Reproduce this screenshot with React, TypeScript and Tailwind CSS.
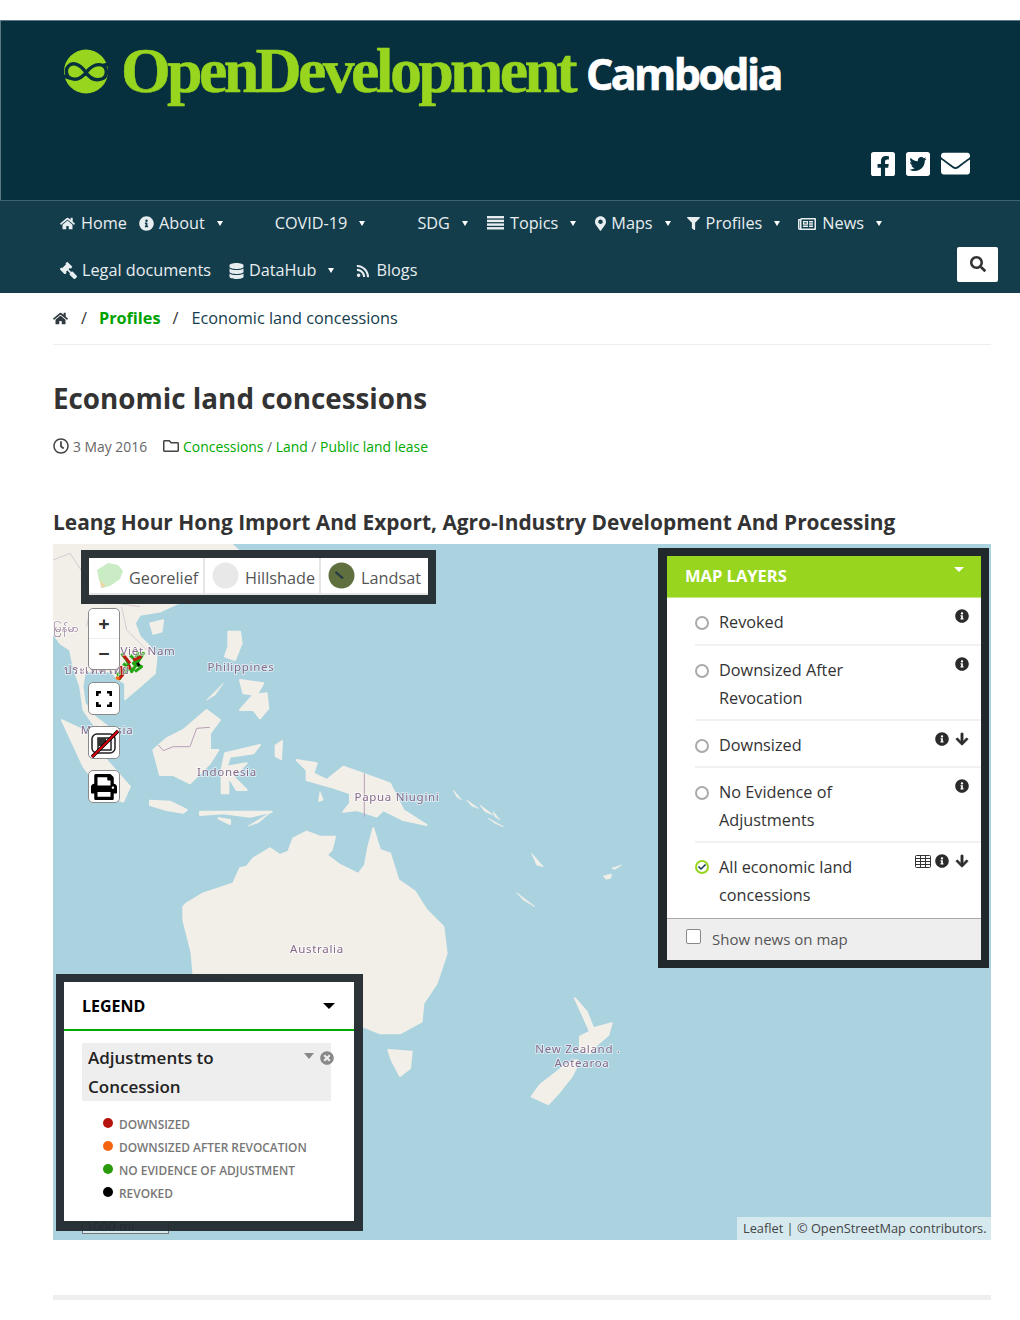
import React from "react";
import {
  FaHome, FaInfoCircle, FaMapMarkerAlt, FaFilter, FaRegNewspaper, FaGavel, FaDatabase, FaRss,
  FaSearch, FaFacebookSquare, FaTwitterSquare, FaEnvelope, FaRegClock, FaRegFolder, FaArrowDown,
  FaTimesCircle, FaCheck, FaPrint,
} from "react-icons/fa";

const Caret = ({ className = "" }: { className?: string }) => (
  <span className={`inline-block w-0 h-0 border-x-[3.5px] border-x-transparent border-t-[5px] border-t-white ${className}`} />
);

function NavItem({ icon, label, caret, className = "" }: { icon?: React.ReactNode; label: string; caret?: string; className?: string }) {
  return (
    <a className={`flex items-center whitespace-nowrap text-[16.25px] text-[#e8eef0] ${className}`}>
      {icon}
      <span>{label}</span>
      {caret ? <Caret className={caret} /> : null}
    </a>
  );
}

function Header() {
  return (
    <header className="bg-[#07303f] h-[180px] border-t border-l border-[#5c7a84] relative flex flex-col">
      <div className="flex items-start pl-[63px] pt-[28px]">
        <svg width="44" height="46" viewBox="0 0 44 46">
          <circle cx="22" cy="22.5" r="22" fill="#97d51f" />
          <path d="M22 23.5C15 14 8 13 4.5 17C1 20.5 2 27 6 29C11 31.5 16 31 22 23.5C28 16 33 14 39 16.5C43.5 19 43.5 27 39 29.5C33 32 27 31 22 23.5M6 29L-1 27M39 16.5L45 15" fill="none" stroke="#07303f" strokeWidth="3.4" />
        </svg>
        <span className="ml-[13px] -mt-[14px] font-['Liberation_Serif',serif] font-bold text-[64px] leading-[72px] tracking-[-3.7px] text-[#97d51f] [-webkit-text-stroke:0.5px_#97d51f]">OpenDevelopment</span>
        <span className="ml-[12px] -mt-[5px] font-['Open_Sans',sans-serif] font-bold text-[43px] leading-[60px] tracking-[-2.6px] text-white [-webkit-text-stroke:0.6px_#ffffff]">Cambodia</span>
      </div>
      <div className="absolute right-[50px] top-[128px] flex items-center gap-[11px] text-white">
        <FaFacebookSquare className="w-[24px] h-[28px]" />
        <FaTwitterSquare className="w-[24px] h-[28px]" />
        <FaEnvelope className="w-[29px] h-[29px]" />
      </div>
    </header>
  );
}

function Bars() {
  return (
    <svg width="17" height="14" viewBox="0 0 17 14" fill="currentColor" className="mr-[6px] -mt-[2px]">
      <rect width="17" height="2.4" />
      <rect y="3.7" width="17" height="2.4" />
      <rect y="7.4" width="17" height="2.4" />
      <rect y="11.1" width="17" height="2.4" />
    </svg>
  );
}

function Nav() {
  return (
    <nav className="bg-[#143d4c] h-[93px] border-t border-[#3f6370] pl-[60px] pr-[22px] flex flex-col">
      <div className="flex items-center h-[45px]">
        <NavItem icon={<FaHome className="w-[15px] h-[15px] mr-[6px]" />} label="Home" />
        <NavItem className="ml-[12px]" icon={<FaInfoCircle className="w-[15px] h-[15px] mr-[5px]" />} label="About" caret="ml-[12px]" />
        <NavItem className="ml-[52px]" label="COVID-19" caret="ml-[12px]" />
        <NavItem className="ml-[52px]" label="SDG" caret="ml-[12px]" />
        <NavItem className="ml-[19px]" icon={<Bars />} label="Topics" caret="ml-[12px]" />
        <NavItem className="ml-[19px]" icon={<FaMapMarkerAlt className="w-[11px] h-[15px] mr-[5px]" />} label="Maps" caret="ml-[12px]" />
        <NavItem className="ml-[16px]" icon={<FaFilter className="w-[13px] h-[13px] mr-[6px]" />} label="Profiles" caret="ml-[12px]" />
        <NavItem className="ml-[17px]" icon={<FaRegNewspaper className="w-[20px] h-[16px] mr-[5px]" />} label="News" caret="ml-[12px]" />
      </div>
      <div className="flex items-center h-[47px] pt-[2px]">
        <NavItem icon={<FaGavel className="w-[17px] h-[17px] mr-[5px] -scale-x-100" />} label="Legal documents" />
        <NavItem className="ml-[18px]" icon={<FaDatabase className="w-[15px] h-[16px] mr-[5px]" />} label="DataHub" caret="ml-[12px]" />
        <NavItem className="ml-[22px]" icon={<FaRss className="w-[14px] h-[14px] mr-[6px]" />} label="Blogs" />
        <button className="ml-auto w-[41px] h-[35px] bg-white rounded-[2px] flex items-center justify-center text-[#333] -mt-[13px]">
          <FaSearch className="w-[16px] h-[16px]" />
        </button>
      </div>
    </nav>
  );
}

const Z6 = "translate(97 76) scale(.33333)";
const Z2 = "translate(-13 -4) scale(.33333)";
const land = "#f2efe9";
const sea = "#aad3df";

function Label({ x, y, t }: { x: number; y: number; t: string }) {
  return (
    <text x={x} y={y} textAnchor="middle" fontSize="11.5" letterSpacing="0.7" fontFamily="'Noto Sans','DejaVu Sans',sans-serif"
      fill="#866a8c" stroke="#ffffff" strokeOpacity="0.55" strokeWidth="2" style={{ paintOrder: "stroke" }}>{t}</text>
  );
}

function MapArt() {
  return (
    <svg viewBox="0 0 938 696" width="938" height="696" className="absolute inset-0">
      <defs>
        <filter id="soft" x="-2%" y="-2%" width="104%" height="104%"><feGaussianBlur stdDeviation="0.6" /></filter>
      </defs>
      <rect width="938" height="696" fill={sea} />
      <g filter="url(#soft)">
        <g transform={Z2} fill={land} stroke={land} strokeWidth="5" strokeLinejoin="round">
          <path d="M39 12L575 12L600 35L590 60L570 100L520 135L480 170L415 190L360 215L300 225L285 250L300 290L330 320L350 350L345 400L300 440L255 478L255 430L230 415L215 395L180 395L135 395L128 440L135 490L165 530L225 575L210 590L165 560L130 510L120 440L100 380L90 330L60 310L39 280Z" />
          <path d="M330 250L370 240L365 275L340 282Z" />
          <path d="M65 540L130 570L200 660L270 740L250 785L200 770L130 680Z" />
          <path d="M39 60L90 40L130 100L150 150L230 190L300 200M150 210L140 260M245 200L260 270L320 330" fill="none" stroke="#c7b5c9" strokeWidth="2" />
        </g>
        <g transform={Z6} fill={land} stroke={land} strokeWidth="6" strokeLinejoin="round">
          <path d="M100 860L110 850L160 820L250 790L270 745L290 740L310 715L360 685L390 705L415 695L430 655L470 635L510 650L555 650L545 690L530 705L570 735L625 762L645 735L655 680L670 625L690 690L720 700L745 780L795 815L830 870L880 920L890 1000L860 1090L820 1150L815 1205L750 1240L690 1240L640 1220L400 1100L130 1060L125 1000L100 900Z" />
          <path d="M10 390L50 355L100 330L170 270L210 300L180 340L180 390L205 390L180 430L120 490L70 465L30 465Z" />
          <path d="M225 400L330 375L310 400L240 410L230 440L290 430L250 470L290 510L260 510L235 470L235 520L215 520L215 450Z" />
          <path d="M0 542L60 545L110 570L100 578L50 570L0 555Z" />
          <path d="M150 575L210 575L310 575L365 575L300 590L220 580L150 585Z" />
          <path d="M205 595L240 600L240 612Z" />
          <path d="M440 420L500 430L490 460L530 480L580 440L650 465L720 490L760 570L830 615L760 600L700 570L680 590L620 570L580 575L600 550L600 520L540 500L470 480L470 450Z" />
          <path d="M235 35L270 35L275 70L255 120L225 110L235 80Z" />
          <path d="M310 225L350 220L355 265L330 295L310 270L270 270Z" />
          <path d="M270 180L340 190L320 225L280 220Z" />
          <path d="M715 1290L785 1295L780 1345L750 1368L725 1320Z" />
          <path d="M1275 1135L1310 1175L1330 1225L1385 1210L1375 1245L1340 1275L1320 1300L1290 1290L1290 1250L1320 1235L1300 1190Z" />
          <path d="M1280 1320L1240 1340L1170 1395L1145 1430L1195 1452L1225 1420L1265 1370L1280 1340Z" />
        </g>
        <g transform={Z6} fill={land} stroke={land} strokeWidth="2" strokeLinejoin="round">
          <path d="M295 618L365 575L325 608Z" />
          <path d="M170 240L220 190L195 225Z" />
          <path d="M1100 818L1155 860L1120 840Z" />
          <path d="M1360 768L1385 762L1382 775L1368 778Z" />
          <path d="M1385 745L1415 735L1395 748Z" />
          <path d="M910 510L935 540L920 530Z" />
          <path d="M950 540L985 565L965 558Z" />
          <path d="M990 555L1030 585L1005 575Z" />
          <path d="M1015 595L1060 620L1035 610Z" />
          <path d="M1030 575L1050 600L1035 590Z" />
          <path d="M1145 700L1180 740L1160 735Z" />
          <path d="M375 375L398 360L395 420L375 410Z" />
          <path d="M510 515L520 540L505 545Z" />
        </g>
        <path transform={Z6} d="M25 375L40 392L70 380L120 380L140 325L180 322M643 460L643 590" fill="none" stroke="#b79fb9" strokeWidth="3" />
      </g>
      <g transform="translate(27 96) scale(.33333)" fill="none" strokeWidth="9" strokeLinejoin="round">
        <path d="M125 40L140 60L155 95L190 40L160 70L185 80L165 95M110 105L130 90L118 118M150 45L165 60L175 35M130 70L145 85L135 100" stroke="#22a512" />
        <path d="M130 45L150 70M122 78L128 105L115 118M160 60L185 50M145 75L150 88" stroke="#bf1a12" />
        <path d="M172 68L178 78" stroke="#111" />
        <path d="M108 112L118 118" stroke="#f26a10" />
      </g>
      <Label x={95} y={111} t="Việt Nam" />
      <Label x={44} y={130} t="ประเทศไทย" />
      <Label x={54} y={190} t="Malaysia" />
      <Label x={13} y={88} t="မြန်မာ" />
      <Label x={188} y={127} t="Philippines" />
      <Label x={174} y={232} t="Indonesia" />
      <Label x={344} y={257} t="Papua Niugini" />
      <Label x={264} y={409} t="Australia" />
      <Label x={525} y={509} t="New Zealand ." />
      <Label x={529} y={523} t="Aotearoa" />
    </svg>
  );
}

function Thumb({ kind }: { kind: "geo" | "hill" | "land" }) {
  return (
    <svg width="27" height="27" viewBox="0 0 27 27" className="shrink-0">
      {kind === "geo" && <>
        <path d="M1 8L12 1L22 3L27 9L24 17L14 24L6 26L3 18Z" fill="#c9ecc4" />
        <path d="M4 18L10 24L5 26Z" fill="#e8d8a8" />
      </>}
      {kind === "hill" && <circle cx="13.5" cy="13.5" r="13" fill="#e8e8e8" />}
      {kind === "land" && <>
        <circle cx="13.5" cy="13.5" r="13" fill="#5f6f3d" />
        <path d="M8 9L16 16L14 17L7 11Z" fill="#233845" />
      </>}
    </svg>
  );
}

function BaseLayers() {
  const items: [string, "geo" | "hill" | "land", string][] = [
    ["Georelief", "geo", "w-[109px]"],
    ["Hillshade", "hill", "w-[116px] pl-[7px]"],
    ["Landsat", "land", "flex-1 pl-[7px]"],
  ];
  return (
    <div className="absolute left-[28px] top-[6px] w-[355px] h-[54px] bg-[#21292d]/95 p-[8px]">
      <div className="bg-white h-[37px] flex items-center pl-[7px] border-b-2 border-[#e5e5e5]">
        {items.map(([t, k, w], i) => (
          <div key={t} className={`flex items-center h-full ${w} ${i < 2 ? "border-r-2 border-[#e5e5e5]" : ""}`}>
            <Thumb kind={k} />
            <span className="ml-[6px] mt-[6px] text-[16.25px] text-[#555]">{t}</span>
          </div>
        ))}
      </div>
    </div>
  );
}

const ctrl = "w-[32px] bg-white border border-[#8a8a8a] rounded-[5px] flex items-center justify-center text-black";

function Controls() {
  return (
    <div className="absolute left-[35px] top-[64px] flex flex-col">
      <div className="w-[32px] h-[62px] bg-white border border-[#8a8a8a] rounded-[5px] flex flex-col text-[#333] text-[20px] font-bold leading-none">
        <div className="h-[30px] flex items-center justify-center border-b border-[#eee]">+</div>
        <div className="flex-1 flex items-center justify-center">−</div>
      </div>
      <div className={`${ctrl} h-[33px] mt-[12px]`}>
        <svg width="16" height="16" viewBox="0 0 16 16" fill="none" stroke="#000" strokeWidth="2.6"><path d="M1.3 5V1.3H5M11 1.3H14.7V5M14.7 11V14.7H11M5 14.7H1.3V11" /></svg>
      </div>
      <div className={`${ctrl} h-[33px] mt-[11px] relative`}>
        <svg width="30" height="30" viewBox="0 0 30 30" fill="none">
          <rect x="3" y="6" width="23" height="19" rx="5" stroke="#222" strokeWidth="1.5" />
          <rect x="9" y="10" width="13" height="12" fill="#fff" stroke="#222" strokeWidth="1.5" />
          <rect x="9" y="10" width="8" height="8" fill="#333" />
          <path d="M3 29L29 3" stroke="#000" strokeWidth="3.4" />
          <path d="M3 29L29 3" stroke="#e00010" strokeWidth="1.8" />
        </svg>
      </div>
      <div className={`${ctrl} h-[33px] mt-[11px]`}>
        <FaPrint className="w-[26px] h-[26px]" />
      </div>
    </div>
  );
}

function Radio({ on }: { on?: boolean }) {
  if (on) {
    return (
      <span className="mt-[7px] w-[14px] h-[14px] rounded-full bg-[#97d51f] flex items-center justify-center shrink-0">
        <span className="w-[10px] h-[10px] rounded-full bg-white flex items-center justify-center text-[#143d4c]"><FaCheck className="w-[8px] h-[8px]" /></span>
      </span>
    );
  }
  return <span className="mt-[8px] w-[14px] h-[14px] rounded-full border-2 border-[#aaa] bg-white shrink-0" />;
}

const Info = () => <FaInfoCircle className="w-[14px] h-[14px] text-[#2b2b2b]" />;
const Down = () => <FaArrowDown className="w-[14px] h-[14px] text-[#2b2b2b]" stroke="currentColor" strokeWidth="24" />;
const Grid = () => (
  <svg width="16" height="13" viewBox="0 0 16 13" fill="none" stroke="#333" strokeWidth="1" className="-mr-[2px]">
    <rect x="0.5" y="0.5" width="15" height="12" rx="1" />
    <path d="M0.5 3.5H15.5M0.5 6.5H15.5M0.5 9.5H15.5M5.5 0.5V12.5M10.5 0.5V12.5" />
  </svg>
);

function LayerRow({ lines, on, icons, pb }: { lines: string[]; on?: boolean; icons: React.ReactNode; pb: string }) {
  return (
    <div className={`ml-[28px] flex items-start pt-[10px] ${pb}`}>
      <Radio on={on} />
      <div className="ml-[10px] text-[16.25px] leading-[28px] text-[#333]">
        {lines.map((l) => <div key={l}>{l}</div>)}
      </div>
      <div className="ml-auto mr-[12px] flex items-center gap-[6px] mt-[1px]">{icons}</div>
    </div>
  );
}

function LayersPanel() {
  return (
    <div className="absolute right-[2px] top-[4px] w-[331px] bg-[#21292d] p-[8px] pl-[9px]">
      <div className="bg-white">
        <div className="h-[42px] bg-[#97d51f] pl-[18px] flex items-center justify-between pr-[17px] text-white border-b border-[#c5e77f]">
          <span className="text-[16.5px] font-bold">MAP LAYERS</span>
          <span className="w-0 h-0 border-x-[5px] border-x-transparent border-t-[5px] border-t-white -mt-[14px]" />
        </div>
        <LayerRow lines={["Revoked"]} icons={<Info />} pb="pb-[8px] border-b-2 border-[#f1f1f1]" />
        <LayerRow lines={["Downsized After", "Revocation"]} icons={<Info />} pb="pb-[7px] border-b-2 border-[#f1f1f1]" />
        <LayerRow lines={["Downsized"]} icons={<><Info /><Down /></>} pb="pb-[7px] border-b-2 border-[#f1f1f1]" />
        <LayerRow lines={["No Evidence of", "Adjustments"]} icons={<Info />} pb="pb-[7px] border-b-2 border-[#f1f1f1]" />
        <LayerRow lines={["All economic land", "concessions"]} on icons={<><Grid /><Info /><Down /></>} pb="pb-[9px]" />
        <div className="h-[42px] bg-[#eeeeee] border-t border-[#aaa] flex items-center pl-[19px]">
          <span className="w-[15px] h-[15px] bg-white border border-[#888] rounded-[2px] -mt-[7px]" />
          <span className="ml-[11px] text-[15px] text-[#555]">Show news on map</span>
        </div>
      </div>
    </div>
  );
}

function LegendRow({ color, t }: { color: string; t: string }) {
  return (
    <div className="flex items-center h-[23px]">
      <span className="w-[10px] h-[10px] rounded-full -mt-[3px]" style={{ background: color }} />
      <span className="ml-[6px] text-[11.9px] font-semibold text-[#777]">{t}</span>
    </div>
  );
}

function Legend() {
  return (
    <>
      <div className="absolute left-[29px] bottom-[6px] w-[87px] h-[20px] border-x border-b border-[#777] bg-white/50 text-[13px] leading-[14px] pl-[3px] pt-[5px] text-[#333]">1000 mi</div>
      <div className="absolute left-[3px] top-[430px] w-[307px] h-[257px] bg-[#21292d]/95 p-[8px]">
        <div className="bg-white h-[239px] w-[290px]">
          <div className="h-[49px] border-b-2 border-[#00a800] flex items-center justify-between pl-[18px] pr-[19px]">
            <span className="text-[16px] font-bold text-black">LEGEND</span>
            <span className="w-0 h-0 border-x-[6px] border-x-transparent border-t-[6px] border-t-black" />
          </div>
          <div className="relative ml-[18px] mt-[12px] w-[249px] h-[58px] bg-[#eeeeee] pl-[6px] text-[17px] leading-[29px] font-semibold text-[#222]">
            Adjustments to<br />Concession
            <span className="absolute left-[222px] top-[10px] w-0 h-0 border-x-[5.5px] border-x-transparent border-t-[6px] border-t-[#888]" />
            <FaTimesCircle className="absolute left-[238px] top-[8px] w-[14px] h-[14px] text-[#888]" />
          </div>
          <div className="ml-[39px] mt-[12px]">
            <LegendRow color="#b5140e" t="DOWNSIZED" />
            <LegendRow color="#f2640f" t="DOWNSIZED AFTER REVOCATION" />
            <LegendRow color="#2a9a0c" t="NO EVIDENCE OF ADJUSTMENT" />
            <LegendRow color="#000" t="REVOKED" />
          </div>
        </div>
      </div>
    </>
  );
}

export default function App() {
  return (
    <div className="w-[1020px] h-[1320px] bg-white pt-[20px] font-['Open_Sans',sans-serif] text-[#333]">
      <Header />
      <Nav />
      <main className="mx-[53px] w-[938px]">
        <div className="h-[52px] border-b border-[#eee] flex items-center text-[16.25px] pb-[1px]">
          <FaHome className="w-[15px] h-[15px] text-[#2f3b40]" />
          <span className="ml-[13px] text-[#333]">/</span>
          <a className="ml-[12px] font-bold text-[#00a300]">Profiles</a>
          <span className="ml-[12px] text-[#333]">/</span>
          <span className="ml-[13px] text-[#143d4c]">Economic land concessions</span>
        </div>
        <h1 className="mt-[33px] text-[27.8px] leading-[40px] font-bold text-[#333]">Economic land concessions</h1>
        <div className="mt-[19px] flex items-center text-[13.9px] leading-[20px] text-[#666]">
          <FaRegClock className="w-[16px] h-[16px] text-[#444] -mt-[2px]" />
          <span className="ml-[4px]">3 May 2016</span>
          <FaRegFolder className="ml-[15px] w-[18px] h-[16px] text-[#444] -mt-[3px]" />
          <span className="ml-[3px]">
            <a className="text-[#00a800]">Concessions</a> / <a className="text-[#00a800]">Land</a> / <a className="text-[#00a800]">Public land lease</a>
          </span>
        </div>
        <h2 className="mt-[50px] text-[20.9px] leading-[30px] font-bold text-[#333]">Leang Hour Hong Import And Export, Agro-Industry Development And Processing</h2>
        <div className="relative mt-[7px] h-[696px] overflow-hidden">
          <MapArt />
          <BaseLayers />
          <Controls />
          <LayersPanel />
          <Legend />
          <div className="absolute right-0 bottom-0 h-[23px] w-[254px] bg-white/50 flex items-center pl-[6px] text-[12.8px] text-[#444]">Leaflet | © OpenStreetMap contributors.</div>
        </div>
        <div className="mt-[55px] h-[5px] bg-[#eeeeee]" />
      </main>
    </div>
  );
}
